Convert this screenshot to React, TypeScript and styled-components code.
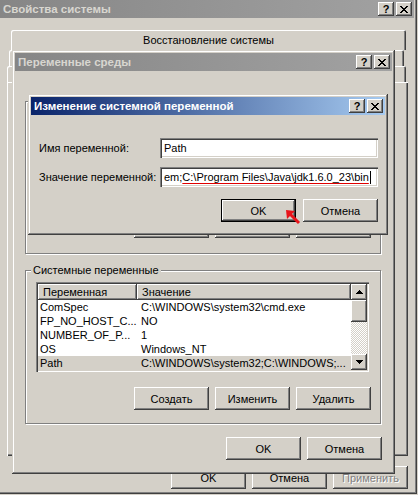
import styled, { createGlobalStyle, css } from "styled-components";

const face = "#d4d0c8";

const raised = css`
  box-shadow: inset -1px -1px #404040, inset 1px 1px #ffffff, inset -2px -2px #808080, inset 2px 2px ${face};
`;

const sunken = css`
  box-shadow: inset 1px 1px #808080, inset 2px 2px #404040, inset -1px -1px #ffffff, inset -2px -2px ${face};
`;

const GlobalStyle = createGlobalStyle`
  html, body {
    margin: 0;
    padding: 0;
    background: ${face};
    overflow: hidden;
  }
  body {
    font-family: "Liberation Sans", Arial, sans-serif;
    font-size: 11px;
    color: #000;
  }
`;

const Desktop = styled.div`
  position: relative;
  width: 418px;
  height: 495px;
  overflow: hidden;
  background: ${face};
`;

/* classic 3D window frame; windows are stacked freely on the desktop */
const Window = styled.section<{ $x: number; $y: number; $w: number; $h: number }>`
  position: absolute;
  left: ${(p) => p.$x}px;
  top: ${(p) => p.$y}px;
  width: ${(p) => p.$w}px;
  height: ${(p) => p.$h}px;
  box-sizing: border-box;
  padding: 3px;
  display: flex;
  flex-direction: column;
  background: ${face};
  box-shadow: inset -1px -1px #404040, inset 1px 1px ${face}, inset -2px -2px #808080,
    inset 2px 2px #ffffff;
`;

const TitleBar = styled.div<{ $active?: boolean }>`
  flex: none;
  height: 18px;
  display: flex;
  align-items: center;
  padding: 0 2px 0 3px;
  background: ${(p) =>
    p.$active
      ? "linear-gradient(90deg, #0a246a, #a6caf0)"
      : "linear-gradient(90deg, #868686, #a2a2a2)"};
  color: ${(p) => (p.$active ? "#ffffff" : "#d8d6d0")};
  font-weight: bold;
  font-size: 11.5px;
`;

const TitleText = styled.span`
  flex: 1;
  white-space: nowrap;
  overflow: hidden;
`;

const CaptionButton = styled.div`
  width: 16px;
  height: 14px;
  margin-left: 2px;
  flex: none;
  display: flex;
  align-items: center;
  justify-content: center;
  background: ${face};
  ${raised};
  color: #000;
  font-weight: bold;
  font-size: 11px;
  line-height: 14px;
`;

const PushButton = styled.div<{ $default?: boolean; $disabled?: boolean }>`
  width: 75px;
  height: 23px;
  flex: none;
  box-sizing: border-box;
  display: flex;
  align-items: center;
  justify-content: center;
  background: ${face};
  ${(p) =>
    p.$default
      ? css`
          box-shadow: inset 0 0 0 1px #000000, inset -2px -2px #404040, inset 2px 2px #ffffff,
            inset -3px -3px #808080;
        `
      : raised};
  color: ${(p) => (p.$disabled ? "#808080" : "#000")};
  text-shadow: ${(p) => (p.$disabled ? "1px 1px #ffffff" : "none")};
  white-space: nowrap;
`;

const ButtonRow = styled.div<{ $gap: number; $top: number }>`
  display: flex;
  justify-content: flex-end;
  gap: ${(p) => p.$gap}px;
  margin-top: ${(p) => p.$top}px;
`;

/* ---- System properties (back window) ---- */

const PropsClient = styled.div`
  flex: 1;
  display: flex;
  flex-direction: column;
  padding: 12px 6px 2px 7px;
`;

const TabRow = styled.div<{ $left: number; $right: number; $h: number }>`
  flex: none;
  display: flex;
  height: ${(p) => p.$h}px;
  padding: 0 ${(p) => p.$right}px 0 ${(p) => p.$left}px;
`;

const Tab = styled.div`
  flex: 1;
  display: flex;
  align-items: center;
  justify-content: center;
  border-radius: 2px 2px 0 0;
  box-shadow: inset 1px 1px #ffffff, inset -1px 0 #404040, inset -2px 0 #808080;
  white-space: nowrap;
  overflow: hidden;
`;

const TabPanel = styled.div`
  flex: 1;
  box-shadow: inset 1px 1px #ffffff, inset -1px -1px #404040, inset -2px -2px #808080;
`;

/* ---- Environment variables window ---- */

const EnvClient = styled.div`
  flex: 1;
  display: flex;
  flex-direction: column;
  padding: 30px 10px 0 10px;
`;

const GroupBox = styled.div<{ $h: number; $top: number }>`
  flex: none;
  height: ${(p) => p.$h}px;
  margin-top: ${(p) => p.$top}px;
  margin-right: 1px;
  box-sizing: border-box;
  border: 1px solid #808080;
  box-shadow: inset 1px 1px #ffffff, 1px 1px #ffffff;
  padding: 0 9px 0 10px;
  display: flex;
  flex-direction: column;
`;

const GroupCaption = styled.div`
  align-self: flex-start;
  margin: -7px 0 0 -5px;
  padding: 0 2px;
  line-height: 13px;
  background: ${face};
  white-space: nowrap;
`;

const ListView = styled.div<{ $h: number; $top: number }>`
  flex: none;
  width: 333px;
  height: ${(p) => p.$h}px;
  margin-top: ${(p) => p.$top}px;
  box-sizing: border-box;
  padding: 2px;
  background: #ffffff;
  ${sunken};
  display: flex;
`;

const ListBody = styled.div`
  flex: 1;
  min-width: 0;
  display: flex;
  flex-direction: column;
  overflow: hidden;
`;

const HeaderRow = styled.div`
  flex: none;
  display: flex;
  height: 16px;
`;

const HeaderCell = styled.div<{ $w?: number }>`
  ${(p) => (p.$w ? `width: ${p.$w}px; flex: none;` : "flex: 1;")}
  box-sizing: border-box;
  padding-left: 5px;
  line-height: 16px;
  background: ${face};
  ${raised};
  white-space: nowrap;
  overflow: hidden;
`;

const Row = styled.div<{ $selected?: boolean }>`
  flex: none;
  display: flex;
  height: 14px;
  line-height: 14px;
  background: ${(p) => (p.$selected ? face : "transparent")};
`;

const Cell = styled.div<{ $w?: number; $pad: number }>`
  ${(p) => (p.$w ? `width: ${p.$w}px; flex: none;` : "flex: 1;")}
  box-sizing: border-box;
  padding-left: ${(p) => p.$pad}px;
  white-space: nowrap;
  overflow: hidden;
`;

const ScrollBar = styled.div`
  width: 16px;
  flex: none;
  display: flex;
  flex-direction: column;
  background: repeating-conic-gradient(#ffffff 0 25%, ${face} 0 50%) 0 0 / 2px 2px;
`;

const ScrollButton = styled.div`
  flex: none;
  height: 16px;
  display: flex;
  align-items: center;
  justify-content: center;
  background: ${face};
  ${raised};
`;

const ScrollThumb = styled.div`
  flex: none;
  height: 22px;
  background: ${face};
  ${raised};
`;

const ScrollTrack = styled.div`
  flex: 1;
`;

/* ---- Edit variable dialog ---- */

const EditClient = styled.div`
  flex: 1;
  display: flex;
  flex-direction: column;
  padding: 23px 7px 0 8px;
`;

const FormGrid = styled.div`
  display: grid;
  grid-template-columns: 1fr 218px;
  grid-auto-rows: 20px;
  row-gap: 9px;
  align-items: center;
`;

const TextField = styled.div`
  height: 20px;
  box-sizing: border-box;
  padding: 0 4px;
  display: flex;
  align-items: center;
  background: #ffffff;
  ${sunken};
  white-space: nowrap;
  overflow: hidden;
`;

const Misspelled = styled.span`
  text-decoration: underline;
  text-decoration-color: #e00000;
  text-underline-offset: 2px;
`;

const Caret = styled.span`
  display: inline-block;
  width: 1px;
  height: 13px;
  margin-left: 1px;
  background: #000;
`;

const Pointer = styled.svg`
  position: absolute;
  left: 285px;
  top: 209px;
`;

const CloseGlyph = () => (
  <svg width="8" height="7" viewBox="0 0 8 7" shapeRendering="crispEdges">
    <path
      fill="#000"
      d="M0 0h2v1H0zM6 0h2v1H6zM1 1h2v1H1zM5 1h2v1H5zM2 2h4v1H2zM3 3h2v1H3zM2 4h4v1H2zM1 5h2v1H1zM5 5h2v1H5zM0 6h2v1H0zM6 6h2v1H6z"
    />
  </svg>
);

const ArrowGlyph = ({ down }: { down?: boolean }) => (
  <svg width="7" height="4" viewBox="0 0 7 4" shapeRendering="crispEdges">
    <path
      fill="#000"
      d={
        down
          ? "M0 0h7v1H0zM1 1h5v1H1zM2 2h3v1H2zM3 3h1v1H3z"
          : "M3 0h1v1H3zM2 1h3v1H2zM1 2h5v1H1zM0 3h7v1H0z"
      }
    />
  </svg>
);

const Caption = ({ title, active }: { title: string; active?: boolean }) => (
  <TitleBar $active={active}>
    <TitleText>{title}</TitleText>
    <CaptionButton>?</CaptionButton>
    <CaptionButton>
      <CloseGlyph />
    </CaptionButton>
  </TitleBar>
);

interface IVariable {
  name: string;
  value: string;
  selected?: boolean;
}

const systemVars: IVariable[] = [
  { name: "ComSpec", value: "C:\\WINDOWS\\system32\\cmd.exe" },
  { name: "FP_NO_HOST_C...", value: "NO" },
  { name: "NUMBER_OF_P...", value: "1" },
  { name: "OS", value: "Windows_NT" },
  { name: "Path", value: "C:\\WINDOWS\\system32;C:\\WINDOWS;...", selected: true },
];

const VariableList = ({ rows, height, top }: { rows: IVariable[]; height: number; top: number }) => (
  <ListView $h={height} $top={top}>
    <ListBody>
      {rows.length > 0 && (
        <HeaderRow>
          <HeaderCell $w={99}>Переменная</HeaderCell>
          <HeaderCell>Значение</HeaderCell>
        </HeaderRow>
      )}
      {rows.map((row) => (
        <Row key={row.name} $selected={row.selected}>
          <Cell $w={99} $pad={2}>
            {row.name}
          </Cell>
          <Cell $pad={4}>{row.value}</Cell>
        </Row>
      ))}
    </ListBody>
    <ScrollBar>
      <ScrollButton>
        <ArrowGlyph />
      </ScrollButton>
      <ScrollThumb />
      <ScrollTrack />
      <ScrollButton>
        <ArrowGlyph down />
      </ScrollButton>
    </ScrollBar>
  </ListView>
);

const VariableButtons = () => (
  <ButtonRow $gap={6} $top={15}>
    <PushButton>Создать</PushButton>
    <PushButton>Изменить</PushButton>
    <PushButton>Удалить</PushButton>
  </ButtonRow>
);

export default function App() {
  return (
    <Desktop>
      <GlobalStyle />

      <Window $x={-3} $y={-3} $w={420} $h={497}>
        <Caption title="Свойства системы" />
        <PropsClient>
          <TabRow $left={4} $right={2} $h={20}>
            <Tab>Восстановление системы</Tab>
          </TabRow>
          {/* the lower tab rows sit under the child window */}
          <TabRow $left={2} $right={4} $h={16}>
            <Tab />
            <Tab />
          </TabRow>
          <TabRow $left={0} $right={2} $h={16}>
            <Tab />
            <Tab />
            <Tab />
            <Tab />
          </TabRow>
          <TabPanel />
          <ButtonRow $gap={6} $top={10}>
            <PushButton>OK</PushButton>
            <PushButton>Отмена</PushButton>
            <PushButton $disabled>Применить</PushButton>
          </ButtonRow>
        </PropsClient>
      </Window>

      <Window $x={12} $y={50} $w={383} $h={424}>
        <Caption title="Переменные среды" />
        <EnvClient>
          <GroupBox $h={153} $top={0}>
            <VariableList rows={[]} height={87} top={11} />
            <VariableButtons />
          </GroupBox>
          <GroupBox $h={154} $top={16}>
            <GroupCaption>Системные переменные</GroupCaption>
            <VariableList rows={systemVars} height={90} top={5} />
            <VariableButtons />
          </GroupBox>
          <ButtonRow $gap={6} $top={13}>
            <PushButton>OK</PushButton>
            <PushButton>Отмена</PushButton>
          </ButtonRow>
        </EnvClient>
      </Window>

      <Window $x={28} $y={94} $w={360} $h={141}>
        <Caption title="Изменение системной переменной" active />
        <EditClient>
          <FormGrid>
            <span>Имя переменной:</span>
            <TextField>Path</TextField>
            <span>Значение переменной:</span>
            <TextField>
              em;<Misspelled>C:\Program Files\Java\jdk1.6.0_23\bin</Misspelled>
              <Caret />
            </TextField>
          </FormGrid>
          <ButtonRow $gap={7} $top={12}>
            <PushButton $default>OK</PushButton>
            <PushButton>Отмена</PushButton>
          </ButtonRow>
        </EditClient>
      </Window>

      <Pointer width="16" height="16" viewBox="0 0 16 16">
        <path d="M5 5 L14 14" stroke="#e8151b" strokeWidth="3" />
        <path d="M1 1 L10 2 L2 10 Z" fill="#e8151b" />
      </Pointer>
    </Desktop>
  );
}
